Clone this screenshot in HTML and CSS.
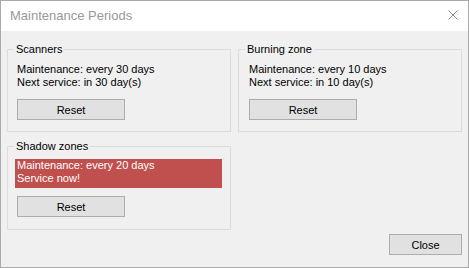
FILE: index.html
```html
<!DOCTYPE html>
<html lang="en">
<head>
<meta charset="utf-8">
<title>Maintenance Periods</title>
<link rel="stylesheet" href="styles.css">
</head>
<body>
<div class="window">
  <div class="titlebar">
    <span class="title">Maintenance Periods</span>
    <span class="close-x" aria-label="Close">
      <svg width="10" height="10" viewBox="0 0 10 10"><path d="M0.5 0.5 L9.5 9.5 M9.5 0.5 L0.5 9.5" stroke="#8a8a8a" stroke-width="1" fill="none"/></svg>
    </span>
  </div>
  <div class="client">
    <div class="groups">
      <fieldset class="group">
        <legend>Scanners</legend>
        <div class="group-body">
          <div class="info">Maintenance: every 30 days<br>Next service: in 30 day(s)</div>
          <button class="btn btn-reset">Reset</button>
        </div>
      </fieldset>
      <fieldset class="group">
        <legend>Burning zone</legend>
        <div class="group-body group-body-right">
          <div class="info">Maintenance: every 10 days<br>Next service: in 10 day(s)</div>
          <button class="btn btn-reset">Reset</button>
        </div>
      </fieldset>
      <fieldset class="group group-alert">
        <legend>Shadow zones</legend>
        <div class="group-body">
          <div class="info alert">Maintenance: every 20 days<br>Service now!</div>
          <button class="btn btn-reset">Reset</button>
        </div>
      </fieldset>
    </div>
    <div class="footer">
      <button class="btn btn-close">Close</button>
    </div>
  </div>
</div>
</body>
</html>
```
FILE: styles.css
```css
html, body {
  margin: 0;
  padding: 0;
}
body {
  background: #f0f0f0;
  font-family: "Liberation Sans", Arial, sans-serif;
  font-size: 11px;
  color: #000;
}
.window {
  box-sizing: border-box;
  width: 469px;
  height: 268px;
  border: 1px solid #aaaaaa;
  background: #f0f0f0;
  display: flex;
  flex-direction: column;
}
.titlebar {
  height: 30px;
  flex: none;
  background: #fff;
  display: flex;
  align-items: center;
  justify-content: space-between;
  padding: 0 10px 0 9px;
}
.title {
  color: #999;
  font-size: 13px;
  line-height: 30px;
}
.close-x {
  display: block;
  width: 10px;
  height: 10px;
  margin-bottom: 2px;
}
.close-x svg {
  display: block;
}
.client {
  flex: 1;
  padding: 10px 6px 0 6px;
}
.groups {
  display: grid;
  grid-template-columns: 224px 224px;
  column-gap: 7px;
  row-gap: 6px;
}
.group {
  margin: 0;
  padding: 0;
  min-width: 0;
  border: 1px solid #dcdcdc;
}
.group legend {
  margin-left: 6px;
  padding: 0 2px;
  line-height: 16px;
}
.group-body {
  padding: 6px 9px 11px 9px;
}
.group-body-right {
  padding-left: 10px;
}
.info {
  line-height: 13px;
}
.alert {
  background: #c0504d;
  color: #fff;
  box-sizing: border-box;
  width: 207px;
  margin-left: -2px;
  padding: 0 2px 3px 2px;
}
.group-alert .group-body {
  padding-top: 5px;
  padding-bottom: 12px;
}
.btn {
  display: block;
  box-sizing: border-box;
  border: 1px solid #adadad;
  background: #e1e1e1;
  color: #000;
  font: inherit;
  padding: 0;
  height: 21px;
}
.btn-reset {
  width: 108px;
  margin-top: 10px;
}
.group-alert .btn-reset {
  margin-top: 8px;
}
.footer {
  display: flex;
  justify-content: flex-end;
  margin-top: 4px;
}
.btn-close {
  width: 73px;
}
```
